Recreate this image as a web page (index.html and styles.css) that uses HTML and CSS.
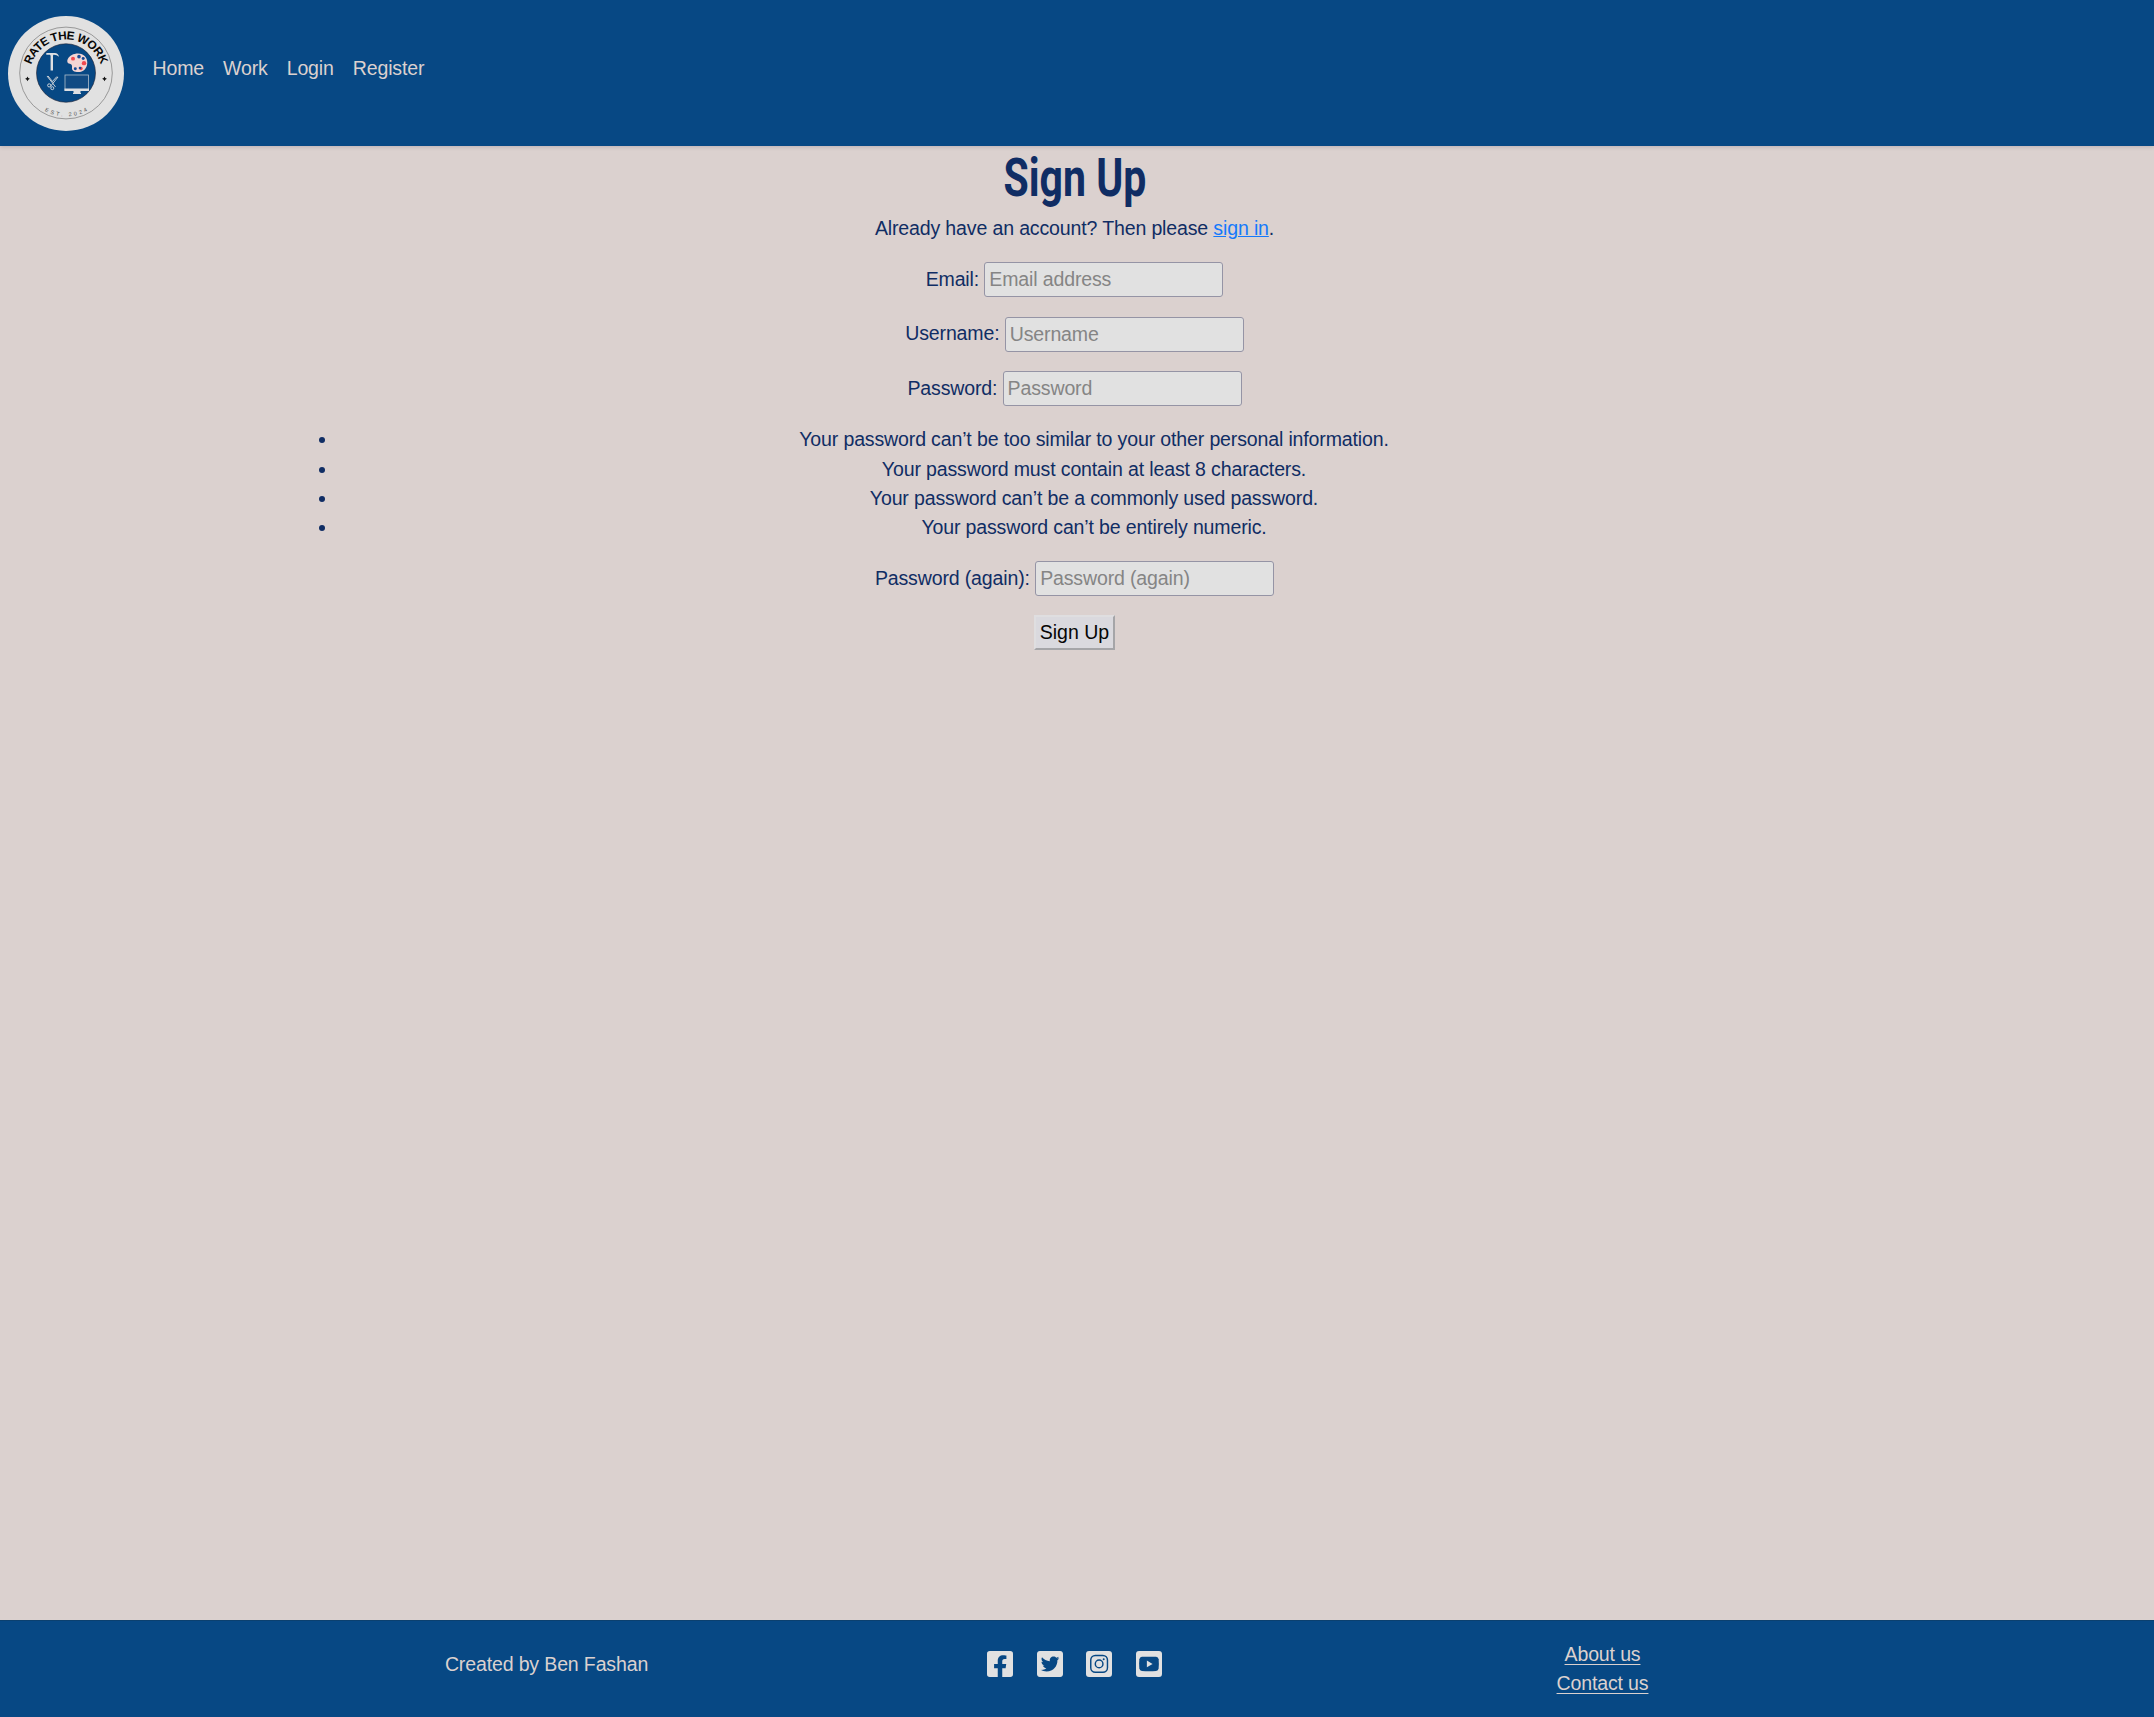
FILE: index.html
```html
<!DOCTYPE html>
<html lang="en">
<head>
<meta charset="utf-8">
<title>Rate The Work - Sign Up</title>
<link rel="stylesheet" href="styles.css">
</head>
<body>
<header class="site-header">
  <a class="logo" aria-label="Rate The Work">
    <svg viewBox="0 0 116 116" width="116" height="115" preserveAspectRatio="none">
      <defs>
        <path id="arc-top" d="M22.3 66.5A36.3 36.3 0 1 1 93.7 66.5"/>
        <path id="arc-bottom" d="M14.7 58A43.3 43.3 0 0 0 101.3 58"/>
      </defs>
      <circle cx="58" cy="58" r="58" fill="#e1e1e1"/>
      <circle cx="58" cy="57.5" r="46.3" fill="none" stroke="#777" stroke-width=".7"/>
      <circle cx="58" cy="57.5" r="29.5" fill="#074884" stroke="#223" stroke-width=".6"/>
      <text class="logo-name"><textPath href="#arc-top" startOffset="50%" text-anchor="middle" textLength="92">RATE THE WORK</textPath></text>
      <text class="logo-year"><textPath href="#arc-bottom" startOffset="50%" text-anchor="middle" textLength="45">EST. 2024</textPath></text>
      <path fill="#111" d="M19.500 61l.8 1.600 1.600.8-1.600.8-.8 1.600-.8-1.600-1.600-.8 1.600-.8zM96.500 61l.8 1.600 1.600.8-1.600.8-.8 1.600-.8-1.600-1.600-.8 1.600-.8z"/>
      <path fill="#dedfe2" d="M38.300 37.200h8.500q3.300.2 4.300 4-2.500-2.400-5.700-2.200l-.4 1.200V55h-2.400V40.200l-.6-1.200h-3.700z"/>
      <path fill="#f3d5d4" d="M70 37.800c6 0 9.500 4.500 9.300 9.500-.3 5.500-4 9.300-9 9.300-4 0-6.800-1.600-6.300-4.600.3-2-.2-3.400-2.200-3.800-2.600-.4-3-2.600-2-4.800C61.500 40 65.500 37.800 70 37.800z"/>
      <g fill="#f04a50"><circle cx="65" cy="43" r="2"/><circle cx="76" cy="47.600" r="2.200"/><circle cx="73" cy="53" r="1.700"/></g>
      <g fill="#164a94"><circle cx="71" cy="41" r="1.800"/><circle cx="75.200" cy="42.800" r="1.500"/><circle cx="67.300" cy="53.300" r="1.500"/><circle cx="72" cy="52.500" r="1.300"/></g>
      <g fill="none" stroke="#ccd2d8" stroke-width="1"><path d="M39 60.500l8.500 11M50 61.500l-7.500 9.500M40 60.500l4 5M49 61l-5 5.500"/><circle cx="41.200" cy="70" r="1.600"/><circle cx="44.300" cy="72.800" r="1.500"/></g>
      <rect x="57" y="59.500" width="23.500" height="15.500" fill="#124b83" stroke="#aebdcb" stroke-width=".8"/>
      <path fill="#dedfe2" d="M56.500 73.200h24.500v2.500h-8.500v2H73v1H65v-1h.5v-2h-9z"/>
    </svg>
  </a>
  <nav class="nav"><a>Home</a><a>Work</a><a>Login</a><a>Register</a></nav>
</header>
<main class="content">
  <h1 class="title"><span class="title-text">Sign Up</span></h1>
  <p class="intro">Already have an account? Then please <a class="link">sign in</a>.</p>
  <form class="form">
    <p class="field"><label for="email">Email:</label> <input class="input" id="email" type="email" placeholder="Email address"></p>
    <p class="field"><label for="username">Username:</label> <input class="input" id="username" type="text" placeholder="Username"></p>
    <p class="field"><label for="password1">Password:</label> <input class="input" id="password1" type="password" placeholder="Password"></p>
    <ul class="rules">
      <li>Your password can’t be too similar to your other personal information.</li>
      <li>Your password must contain at least 8 characters.</li>
      <li>Your password can’t be a commonly used password.</li>
      <li>Your password can’t be entirely numeric.</li>
    </ul>
    <p class="field"><label for="password2">Password (again):</label> <input class="input" id="password2" type="password" placeholder="Password (again)"></p>
    <button class="submit" type="button">Sign Up</button>
  </form>
</main>
<footer class="site-footer">
  <div class="footer-inner">
    <p class="credit">Created by Ben Fashan</p>
    <div class="social">
      <svg class="icon" viewBox="0 32 448 448"><path d="M400 32H48A48 48 0 0 0 0 80v352a48 48 0 0 0 48 48h137.250V327.690h-63V256h63v-54.640c0-62.150 37-96.480 93.670-96.480 27.140 0 55.520 4.840 55.520 4.840v61h-31.270c-30.810 0-40.420 19.120-40.420 38.730V256h68.780l-11 71.690h-57.780V480H400a48 48 0 0 0 48-48V80a48 48 0 0 0-48-48z"/></svg>
      <svg class="icon" viewBox="0 32 448 448"><path d="M400 32H48C21.500 32 0 53.500 0 80v352c0 26.500 21.500 48 48 48h352c26.500 0 48-21.500 48-48V80c0-26.500-21.500-48-48-48zm-48.900 158.800c.2 2.800.2 5.700.2 8.500 0 86.700-66 186.600-186.600 186.600-37.200 0-71.700-10.800-100.700-29.400 5.300.6 10.400.8 15.800.8 30.700 0 58.900-10.400 81.400-28-28.800-.6-53-19.500-61.300-45.500 10.100 1.500 19.200 1.500 29.600-1.200-30-6.100-52.500-32.500-52.500-64.400v-.8c8.700 4.900 18.900 7.900 29.600 8.300a65.447 65.447 0 0 1-29.200-54.600c0-12.200 3.200-23.400 8.900-33.100 32.300 39.800 80.800 65.800 135.200 68.600-9.300-44.500 24-80.600 64-80.600 18.900 0 35.900 7.900 47.900 20.700 14.800-2.800 29-8.300 41.600-15.800-4.900 15.200-15.200 28-28.800 36.100 13.200-1.400 26-5.100 37.800-10.200-8.900 13.100-20.100 24.700-32.900 34z"/></svg>
      <svg class="icon" viewBox="0 0 448 448"><rect width="448" height="448" rx="52"/><g class="icon-line"><rect x="82" y="78" width="288" height="288" rx="78"/><circle cx="226" cy="222" r="66"/></g><circle class="icon-cut" cx="305" cy="144" r="17"/></svg>
      <svg class="icon" viewBox="0 0 448 448"><rect width="448" height="448" rx="52"/><path class="icon-cut" d="M102 101Q224 93 346 101Q384 104 390 142Q399 222 390 302Q384 340 346 343Q224 351 102 343Q64 340 58 302Q49 222 58 142Q64 104 102 101z"/><path d="M187 164L286 222L187 280z"/></svg>
    </div>
    <div class="footer-links"><a>About us</a><a>Contact us</a></div>
  </div>
</footer>
</body>
</html>
```
FILE: styles.css
```css
* { box-sizing: border-box; }
body {
  margin: 0;
  min-height: 1717px;
  display: flex;
  flex-direction: column;
  background: #dbd1cf;
  color: #102d64;
  font: 19.55px/29.33px "Liberation Sans", Arial, sans-serif;
  letter-spacing: -.145px;
}
.site-header {
  height: 146px;
  padding: 16px 8px;
  display: flex;
  align-items: flex-start;
  background: #074884;
  box-shadow: 0 1px 4px rgba(60, 50, 80, .2);
}
.logo { display: block; height: 116px; letter-spacing: 0; }
.logo svg { display: block; }
.logo-name { font: bold 11.8px "Liberation Sans", Arial, sans-serif; fill: #080808; }
.logo-year { font: 5.5px "Liberation Sans", Arial, sans-serif; fill: #555; }
.nav { display: flex; gap: 19px; margin: 38px 0 0 28.5px; color: #dbd1cf; }
.content { flex: 1; padding-right: 5px; text-align: center; }
.title { margin: 0; height: 68px; font: bold 54.5px/63px Roboto, sans-serif; letter-spacing: 0; }
.title-text { display: inline-block; transform: scaleX(.752); }
.intro { margin: 0 0 19px; }
.link { color: #1479fb; text-decoration: underline; }
.form { width: 1552px; margin: 0 auto; }
.field {
  height: 35px;
  margin: 0 0 19.3px;
  display: flex;
  justify-content: center;
  align-items: center;
  gap: 5.3px;
}
.input {
  width: 239px;
  height: 35px;
  padding: 1px 4px;
  border: 1px solid #9594a5;
  border-radius: 3px;
  background: #e1e1e1;
  font: inherit;
  letter-spacing: inherit;
}
.input::placeholder { color: #858585; opacity: 1; }
.rules { margin: 0 0 18.6px; padding: 0 0 0 39px; }
.submit {
  display: block;
  width: 81px;
  height: 35px;
  margin: 0 auto;
  padding: 0;
  border: 2px solid;
  border-color: #dfdee0 #a5a5a8 #a5a5a8 #dfdee0;
  background: #dad9de;
  color: #050505;
  font: inherit;
}
.site-footer {
  height: 97px;
  padding-right: 5px;
  border-top: 1px solid #0b406f;
  background: #074884;
  color: #dbd1cf;
}
.footer-inner {
  width: 1584px;
  height: 100%;
  margin: 0 auto;
  display: grid;
  grid-template-columns: repeat(3, 1fr);
  text-align: center;
}
.credit { margin: 29px 0 0; }
.social { display: flex; justify-content: center; gap: 23.7px; padding-top: 30px; }
.icon { width: 26px; height: 26px; fill: #e1e1e1; }
.icon .icon-cut { fill: #074884; }
.icon-line { fill: none; stroke: #074884; stroke-width: 25; }
.footer-links { display: flex; flex-direction: column; align-items: center; padding-top: 19px; }
.footer-links a { text-decoration: underline; text-underline-offset: 3px; text-decoration-thickness: 1px; }
```
